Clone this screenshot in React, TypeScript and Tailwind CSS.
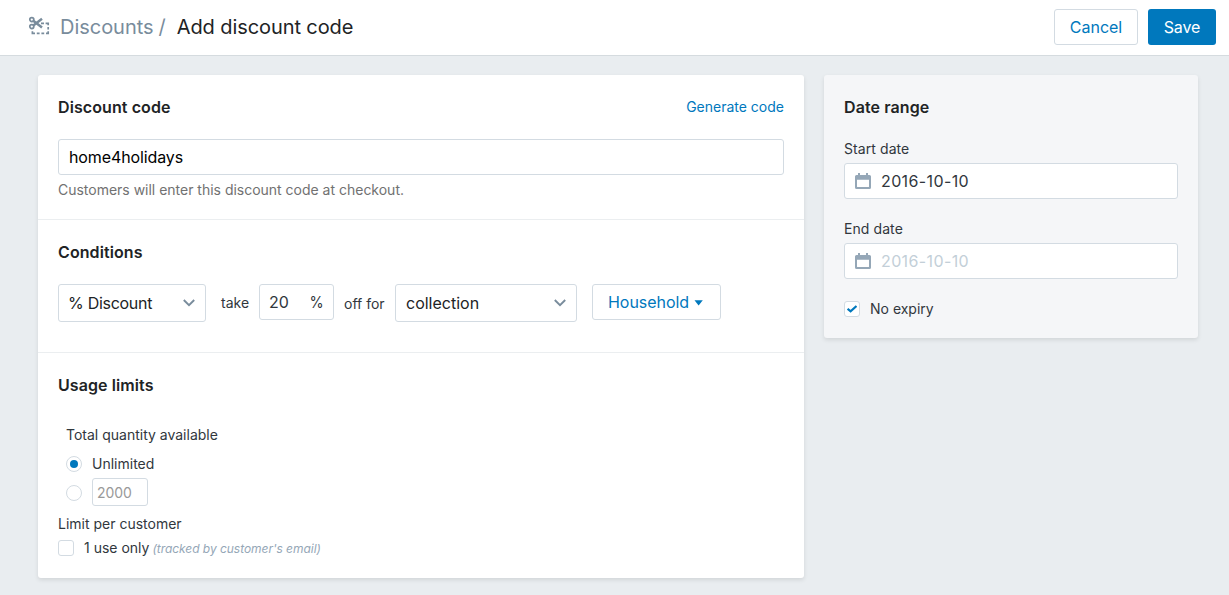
import type { ReactNode } from 'react';

function CouponIcon() {
  return (
    <svg className="relative -top-px h-[20px] w-[22px]" viewBox="0 0 22 20" fill="none" stroke="#798c9c">
      <circle cx="3.8" cy="3.6" r="2" strokeWidth="1.7" />
      <circle cx="3.8" cy="10.6" r="2" strokeWidth="1.7" />
      <path d="M5.3 4.8 14 11.4" strokeWidth="2.5" />
      <path d="M5.3 9.4 14 2.8" strokeWidth="2.5" />
      <path d="M13 7.4h3M17.6 7.4H20.2V9.2M20.2 11v2.4M20.2 15.2v2.2H18M16.2 17.4H13.4M11.6 17.4H8.8M7 17.4H4.4V15.2" strokeWidth="1.7" />
    </svg>
  );
}

function CalendarIcon() {
  return (
    <svg className="h-4 w-4 shrink-0" viewBox="0 0 16 16" fill="#95a7b7">
      <path fillRule="evenodd" d="M3 0h2v2h6V0h2v2h1.5A1.5 1.5 0 0 1 16 3.5v11a1.5 1.5 0 0 1-1.5 1.5h-13A1.5 1.5 0 0 1 0 14.5v-11A1.5 1.5 0 0 1 1.5 2H3zM2 6.8V13.4a.6.6 0 0 0 .6.6h10.8a.6.6 0 0 0 .6-.6V6.8z" />
    </svg>
  );
}

function Chevron() {
  return (
    <svg className="h-[8px] w-[12px]" viewBox="0 0 12 8" fill="none" stroke="#798c9c" strokeWidth="1.9">
      <path d="M.8 1 6 6.2 11.2 1" />
    </svg>
  );
}

function Heading({ children }: { children: ReactNode }) {
  return <h2 className="text-[16px] leading-6 font-semibold tracking-[0.09px] text-[#212325]">{children}</h2>;
}

function Select({ label, width, tracking }: { label: string; width: string; tracking: string }) {
  return (
    <div className={`flex h-[38px] items-center justify-between rounded-[3px] border border-[#d3dbe2] bg-white pr-[10px] pl-[10px] text-[16px] text-[#212325] ${width}`}>
      <span className={tracking}>{label}</span>
      <Chevron />
    </div>
  );
}

function DateField({ label, value, color }: { label: string; value: string; color: string }) {
  return (
    <div>
      <div className="h-[20px] text-[14px] leading-5 tracking-[0.08px] text-[#31373d]">{label}</div>
      <div className="mt-1 flex h-[36px] items-center gap-[10px] rounded-[3px] border border-[#d3dbe2] bg-white pl-[10px]">
        <CalendarIcon />
        <span className={`text-[16px] tracking-[0.38px] ${color}`}>{value}</span>
      </div>
    </div>
  );
}

export default function App() {
  return (
    <div className="min-h-screen bg-[#e9edf0] font-['Inter',sans-serif] text-[14px] text-[#31373d]">
      <header className="flex h-[56px] items-center justify-between border-b border-[#d5dbdf] bg-white pr-[13px] pb-[2px] pl-[28px]">
        <div className="flex items-center text-[20px] leading-6">
          <CouponIcon />
          <span className="ml-[10px] tracking-[-0.03px] text-[#798c9c]">Discounts</span>
          <span className="ml-[5px] text-[#798c9c]">/</span>
          <h1 className="ml-[11px] tracking-[-0.09px] text-[#212325]">Add discount code</h1>
        </div>
        <div className="flex gap-[10px] text-[16px]">
          <button className="h-[36px] w-[84px] rounded-[3px] border border-[#d3dbe2] bg-white text-[#0078bd]">Cancel</button>
          <button className="h-[36px] w-[68px] rounded-[3px] bg-[#0078bd] tracking-[-0.1px] text-white">Save</button>
        </div>
      </header>
      <main className="flex items-start gap-5 pt-[19px] pl-[38px]">
        <div className="h-[503px] w-[766px] rounded-[3px] bg-white shadow-[0_2px_4px_rgba(0,0,0,0.1)]">
          <section className="h-[145px] border-b border-[#ebeef0] px-5 pt-5">
            <div className="flex items-start justify-between">
              <Heading>Discount code</Heading>
              <a className="mt-[2px] leading-5 text-[#0078bd]">Generate code</a>
            </div>
            <div className="mt-5 flex h-[36px] items-center rounded-[3px] border border-[#d3dbe2] pl-[10px] text-[16px] tracking-[-0.12px] text-black">home4holidays</div>
            <p className="mt-[5px] leading-5 tracking-[-0.01px] text-[#717171]">Customers will enter this discount code at checkout.</p>
          </section>
          <section className="h-[133px] border-b border-[#ebeef0] px-5 pt-5">
            <Heading>Conditions</Heading>
            <div className="mt-5 flex items-start">
              <Select label="% Discount" width="w-[148px]" tracking="-ml-px tracking-[-0.28px]" />
              <span className="mt-[9px] ml-[15px] w-[38px] leading-5">take</span>
              <div className="flex h-[36px] w-[75px] items-center justify-between rounded-[3px] border border-[#d3dbe2] pr-[9px] pl-[9px] text-[16px]">
                <span>20</span>
                <span className="inline-block origin-right scale-x-90">%</span>
              </div>
              <span className="mt-[10px] ml-[10px] w-[51px] leading-5">off for</span>
              <Select label="collection" width="w-[182px]" tracking="tracking-normal" />
              <button className="ml-[15px] flex h-[36px] w-[129px] items-center rounded-[3px] border border-[#d3dbe2] pl-[15px] text-[16px] text-[#0078bd]">
                <span className="w-[86px] text-left tracking-[-0.05px]">Household</span>
                <svg className="mt-px h-[6px] w-[9px]" viewBox="0 0 9 6" fill="#0078bd"><path d="M.5 .3h8.3L4.6 5.6z" /></svg>
              </button>
            </div>
          </section>
          <section className="px-5 pt-5">
            <Heading>Usage limits</Heading>
            <div className="mt-[28px] pl-2">
              <div className="leading-5">Total quantity available</div>
              <div className="mt-[9px] flex h-5 items-center">
                <span className="mr-[10px] flex h-4 w-4 items-center justify-center rounded-full border border-[#d3dbe2]">
                  <span className="h-2 w-2 rounded-full bg-[#0078bd]" />
                </span>
                <span className="relative -top-px">Unlimited</span>
              </div>
              <div className="mt-[4px] flex h-[28px] items-center">
                <span className="mt-[2px] mr-[10px] h-4 w-4 rounded-full border border-[#d3dbe2]" />
                <span className="flex h-[28px] w-[56px] items-center rounded-[3px] border border-[#d3dbe2] pt-px pl-1 tracking-[-0.1px] text-[#999]">2000</span>
              </div>
            </div>
            <div className="mt-[8px] leading-5">Limit per customer</div>
            <div className="mt-[4px] flex h-5 items-center">
              <span className="mr-[10px] h-4 w-4 rounded-[3px] border border-[#d3dbe2]" />
              <span className="relative -top-px">1 use only</span>
              <em className="ml-[3px] pt-px text-[12px] tracking-[-0.04px] text-[#95a7b7]">(tracked by customer's email)</em>
            </div>
          </section>
        </div>
        <aside className="h-[263px] w-[374px] rounded-[3px] bg-[#f5f6f8] px-5 pt-5 shadow-[0_2px_4px_rgba(0,0,0,0.1)]">
          <Heading>Date range</Heading>
          <div className="mt-5 flex flex-col gap-5">
            <DateField label="Start date" value="2016-10-10" color="text-[#31373d]" />
            <DateField label="End date" value="2016-10-10" color="text-[#c3cfd8]" />
            <div className="flex h-5 items-center">
              <span className="mr-[10px] flex h-4 w-4 items-center justify-center rounded-[3px] border border-[#d3dbe2] bg-white">
                <svg className="h-[8px] w-[10px]" viewBox="0 0 10 8" fill="none" stroke="#0078bd" strokeWidth="2.2"><path d="M.6 3.8 3.6 6.4 9.5 1" /></svg>
              </span>
              <span className="relative -top-px">No expiry</span>
            </div>
          </div>
        </aside>
      </main>
    </div>
  );
}
